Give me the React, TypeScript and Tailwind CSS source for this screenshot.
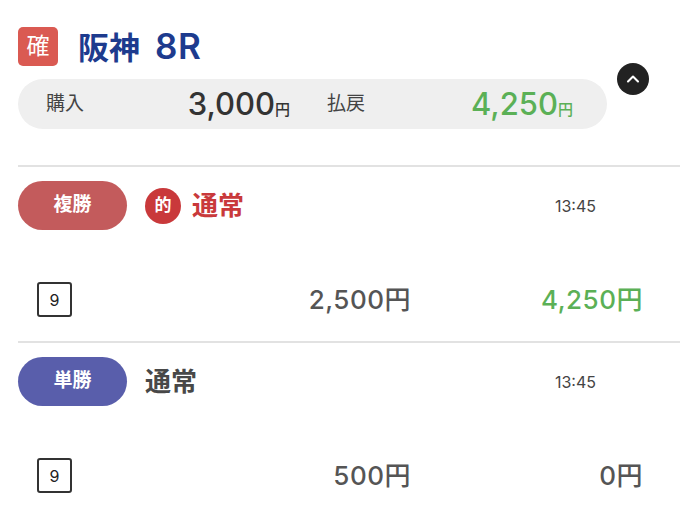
import { ChevronUp } from "lucide-react";

const FONT = { fontFamily: 'Inter, "Noto Sans CJK JP", sans-serif' };

type Bet = {
  type: string;
  typeColor: string;
  hit: boolean;
  method: string;
  time: string;
  horse: string;
  stake: string;
  payout: string;
  won: boolean;
};

const bets: Bet[] = [
  { type: "複勝", typeColor: "bg-[#c35b5c]", hit: true, method: "通常", time: "13:45", horse: "9", stake: "2,500", payout: "4,250", won: true },
  { type: "単勝", typeColor: "bg-[#595eab]", hit: false, method: "通常", time: "13:45", horse: "9", stake: "500", payout: "0", won: false },
];

function BetRow({ bet }: { bet: Bet }) {
  return (
    <div className="border-t-2 border-[#e2e2e2] h-[176px]">
      {/* 券種 */}
      <div className="flex items-center mt-[14px] h-[49px]">
        <div className={`${bet.typeColor} w-[109px] h-[49px] rounded-full flex items-center justify-center text-white text-[19px] font-bold`}>
          {bet.type}
        </div>
        {bet.hit && (
          <div className="ml-[18px] w-[36px] h-[36px] rounded-full bg-[#c9393b] text-white text-[17px] font-bold flex items-center justify-center">
            的
          </div>
        )}
        <span
          className={`text-[26px] font-bold ${bet.hit ? "ml-[11px] text-[#c9393b]" : "ml-[18px] text-[#484848]"}`}
        >
          {bet.method}
        </span>
        <span className="ml-auto mr-[84px] text-[16px] text-[#444]">{bet.time}</span>
      </div>

      {/* 買い目 */}
      <div className="flex items-center mt-[52px] h-[35px] pl-[19px]">
        <div className="w-[35px] h-[35px] border-2 border-[#333] rounded-[3px] flex items-center justify-center text-[16px] text-[#222]">
          {bet.horse}
        </div>
        <span className="ml-auto text-[26px] text-[#555] font-medium tracking-[0.5px]">{bet.stake}円</span>
        <span
          className={`w-[232px] text-right mr-[37px] text-[26px] font-medium tracking-[0.5px] ${bet.won ? "text-[#5bb056]" : "text-[#555]"}`}
        >
          {bet.payout}円
        </span>
      </div>
    </div>
  );
}

export default function App() {
  return (
    <div className="w-[680px] h-[515px] overflow-hidden bg-white pl-[18px]" style={FONT}>
      {/* Header */}
      <div className="flex items-center pt-[27px]">
        <div className="w-[40px] h-[39px] rounded-[5px] bg-[#da5a52] text-white text-[23px] flex items-center justify-center">
          確
        </div>
        <h1 className="ml-[20px] text-[31px] font-semibold text-[#1d3b8e] leading-none flex items-baseline">
          阪神<span className="ml-[15px] text-[35px] tracking-[0.5px]">8R</span>
        </h1>
      </div>

      {/* 購入 / 払戻 */}
      <div className="flex items-start mt-[13px]">
        <div className="w-[589px] h-[50px] rounded-full bg-[#efefef] flex items-center pl-[28px] pr-[34px]">
          <div className="flex items-center justify-between w-[244px]">
            <span className="text-[19px] text-[#444]">購入</span>
            <span className="text-[31px] font-medium text-[#333]">
              3,000<span className="text-[15px]">円</span>
            </span>
          </div>
          <div className="flex items-center justify-between ml-auto w-[246px]">
            <span className="text-[19px] text-[#444]">払戻</span>
            <span className="text-[31px] font-medium text-[#5bb056]">
              4,250<span className="text-[15px]">円</span>
            </span>
          </div>
        </div>
        <button className="ml-[10px] -mt-[16px] w-[32px] h-[32px] rounded-full bg-[#222] flex items-center justify-center">
          <ChevronUp size={20} strokeWidth={2.5} color="#fff" />
        </button>
      </div>

      <div className="mt-[36px]">
        {bets.map((b, i) => (
          <BetRow key={i} bet={b} />
        ))}
      </div>
    </div>
  );
}
